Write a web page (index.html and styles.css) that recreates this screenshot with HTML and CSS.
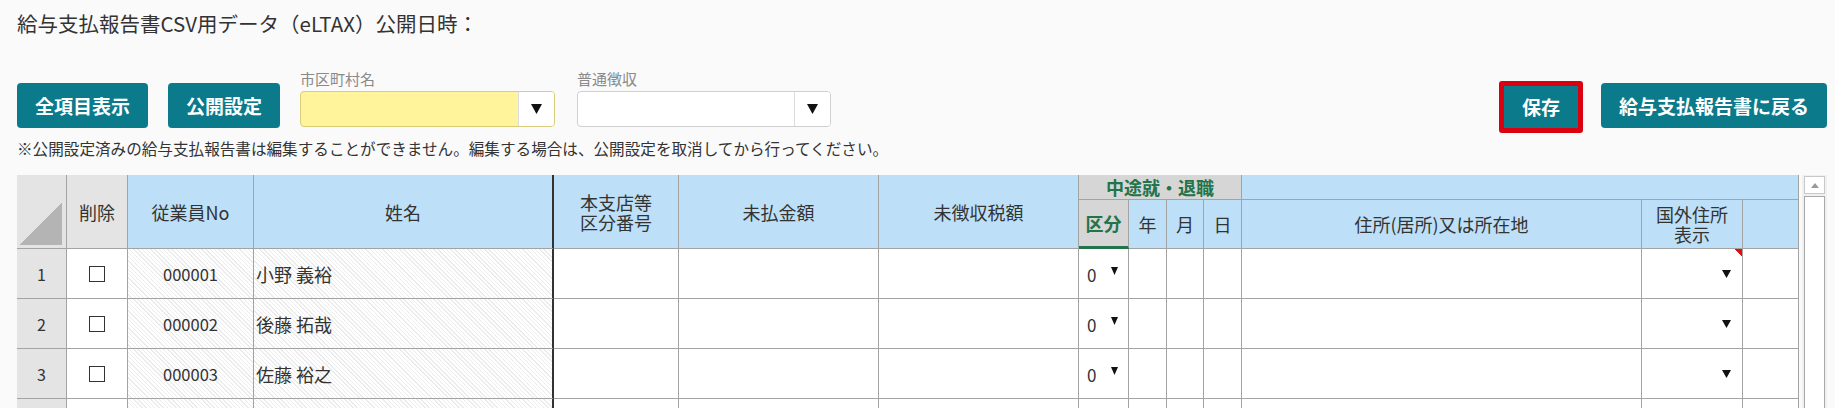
FILE: index.html
```html
<!DOCTYPE html>
<html lang="ja">
<head>
<meta charset="utf-8">
<title>給与支払報告書CSV用データ</title>
<link rel="stylesheet" href="styles.css">
</head>
<body>
<div class="page">
  <h1 class="title">給与支払報告書CSV用データ（eLTAX）公開日時：</h1>

  <div class="toolbar">
    <button class="btn">全項目表示</button>
    <button class="btn">公開設定</button>
    <div class="field">
      <span class="field-label">市区町村名</span>
      <div class="select select-yellow">
        <span class="select-value"></span>
        <span class="select-arrow"><svg width="11" height="10" viewBox="0 0 11 10"><polygon points="0,0 11,0 5.5,10" fill="#111"/></svg></span>
      </div>
    </div>
    <div class="field field-second">
      <span class="field-label">普通徴収</span>
      <div class="select">
        <span class="select-value"></span>
        <span class="select-arrow"><svg width="11" height="10" viewBox="0 0 11 10"><polygon points="0,0 11,0 5.5,10" fill="#111"/></svg></span>
      </div>
    </div>
    <div class="toolbar-right">
      <button class="btn btn-save">保存</button>
      <button class="btn">給与支払報告書に戻る</button>
    </div>
  </div>

  <p class="note">※公開設定済みの給与支払報告書は編集することができません。編集する場合は、公開設定を取消してから行ってください。</p>

  <div class="grid-wrap">
    <div class="grid">
      <div class="c h-gray corner r2"></div>
      <div class="c h-gray r2">削除</div>
      <div class="c h-blue r2">従業員No</div>
      <div class="c h-blue r2 thick">姓名</div>
      <div class="c h-blue r2 stack"><span>本支店等</span><span>区分番号</span></div>
      <div class="c h-blue r2">未払金額</div>
      <div class="c h-blue r2">未徴収税額</div>
      <div class="c h-group s4">中途就・退職</div>
      <div class="c h-blue s3"></div>

      <div class="c h-group h-active">区分</div>
      <div class="c h-blue">年</div>
      <div class="c h-blue">月</div>
      <div class="c h-blue">日</div>
      <div class="c h-blue">住所(居所)又は所在地</div>
      <div class="c h-blue stack"><span>国外住所</span><span>表示</span></div>
      <div class="c h-blue"></div>

      <div class="c rownum">1</div>
      <div class="c"><span class="check"></span></div>
      <div class="c hatch">000001</div>
      <div class="c hatch left thick">小野 義裕</div>
      <div class="c"></div>
      <div class="c"></div>
      <div class="c"></div>
      <div class="c kubun"><span class="kv">0</span><svg class="tri" width="7" height="8" viewBox="0 0 7 8"><polygon points="0,0 7,0 3.5,8" fill="#111"/></svg></div>
      <div class="c"></div>
      <div class="c"></div>
      <div class="c"></div>
      <div class="c"></div>
      <div class="c ddright flag"><svg class="tri" width="9" height="8" viewBox="0 0 9 8"><polygon points="0,0 9,0 4.5,8" fill="#111"/></svg></div>
      <div class="c"></div>

      <div class="c rownum">2</div>
      <div class="c"><span class="check"></span></div>
      <div class="c hatch">000002</div>
      <div class="c hatch left thick">後藤 拓哉</div>
      <div class="c"></div>
      <div class="c"></div>
      <div class="c"></div>
      <div class="c kubun"><span class="kv">0</span><svg class="tri" width="7" height="8" viewBox="0 0 7 8"><polygon points="0,0 7,0 3.5,8" fill="#111"/></svg></div>
      <div class="c"></div>
      <div class="c"></div>
      <div class="c"></div>
      <div class="c"></div>
      <div class="c ddright"><svg class="tri" width="9" height="8" viewBox="0 0 9 8"><polygon points="0,0 9,0 4.5,8" fill="#111"/></svg></div>
      <div class="c"></div>

      <div class="c rownum">3</div>
      <div class="c"><span class="check"></span></div>
      <div class="c hatch">000003</div>
      <div class="c hatch left thick">佐藤 裕之</div>
      <div class="c"></div>
      <div class="c"></div>
      <div class="c"></div>
      <div class="c kubun"><span class="kv">0</span><svg class="tri" width="7" height="8" viewBox="0 0 7 8"><polygon points="0,0 7,0 3.5,8" fill="#111"/></svg></div>
      <div class="c"></div>
      <div class="c"></div>
      <div class="c"></div>
      <div class="c"></div>
      <div class="c ddright"><svg class="tri" width="9" height="8" viewBox="0 0 9 8"><polygon points="0,0 9,0 4.5,8" fill="#111"/></svg></div>
      <div class="c"></div>

      <div class="c rownum"></div>
      <div class="c"></div>
      <div class="c hatch"></div>
      <div class="c hatch left thick"></div>
      <div class="c"></div>
      <div class="c"></div>
      <div class="c"></div>
      <div class="c"></div>
      <div class="c"></div>
      <div class="c"></div>
      <div class="c"></div>
      <div class="c"></div>
      <div class="c"></div>
      <div class="c"></div>
    </div>

    <div class="vscroll">
      <div class="vscroll-up"><svg width="8" height="5" viewBox="0 0 8 5"><polygon points="0,5 8,5 4,0" fill="#9a9a9a"/></svg></div>
      <div class="vscroll-thumb"></div>
    </div>
  </div>
</div>
</body>
</html>
```

FILE: styles.css
```css
* { box-sizing: border-box; }

html, body {
  margin: 0;
  padding: 0;
  background: #fafafa;
  overflow: hidden;
}

body {
  font-family: "Noto Sans CJK JP", "Noto Sans", sans-serif;
  color: #333;
}

.page {
  padding: 9px 8px 0 17px;
}

.title {
  margin: 0;
  font-size: 20.5px;
  line-height: 28px;
  font-weight: normal;
  color: #333;
}

.toolbar {
  display: flex;
  align-items: flex-end;
  gap: 20px;
  margin-top: 32px;
}

.btn {
  height: 45px;
  padding: 0 18px;
  border: none;
  border-radius: 4px;
  background: #0b7a8a;
  color: #fff;
  font-family: "Noto Sans CJK JP", sans-serif;
  font-size: 19px;
  font-weight: bold;
  line-height: 45px;
  white-space: nowrap;
}

.btn-save {
  height: 52px;
  width: 84px;
  padding: 0;
  border: 5px solid #d9000f;
  border-radius: 3px;
  line-height: 42px;
  margin-bottom: -5px;
}

.field {
  display: flex;
  flex-direction: column;
  margin-bottom: 1px;
}

.field-second {
  margin-left: 2px;
}

.field-label {
  font-size: 15px;
  line-height: 20px;
  color: #8a8a8a;
  margin-bottom: 2px;
}

.select {
  display: flex;
  width: 254px;
  height: 36px;
  border: 1px solid #cfcfcf;
  border-radius: 4px;
  background: #fff;
  overflow: hidden;
}

.select-yellow {
  width: 255px;
  background: #fff49b;
  border-color: #d9cd7a;
}

.select-value {
  flex: 1;
}

.select-arrow {
  width: 36px;
  display: flex;
  align-items: center;
  justify-content: center;
  background: #fff;
  border-left: 1px solid #dcdcdc;
}

.toolbar-right {
  margin-left: auto;
  display: flex;
  align-items: flex-end;
  gap: 18px;
}

.note {
  margin: 9px 0 16px;
  font-size: 15.6px;
  line-height: 22px;
  color: #333;
}

.grid-wrap {
  display: flex;
  align-items: flex-start;
}

.grid {
  display: grid;
  grid-template-columns: 50px 61px 126px 300px 125px 200px 200px 50px 38px 37px 38px 400px 101px 56px;
  grid-template-rows: 25px 49px 50px 50px 50px 50px;
  background: #fff;
  font-size: 18px;
  color: #333;
}

.c {
  border-right: 1px solid #a3a3a3;
  border-bottom: 1px solid #a3a3a3;
  display: flex;
  align-items: center;
  justify-content: center;
  white-space: nowrap;
  background: #fff;
  line-height: 24px;
}

.r2 { grid-row: span 2; }
.s4 { grid-column: span 4; }
.s3 { grid-column: span 3; }

.stack {
  flex-direction: column;
  line-height: 20px;
}

.h-blue { background: #bde0f8; }
.h-gray { background: #e4e4e4; }

.corner {
  background: linear-gradient(to bottom right, transparent 50%, #b4b4b4 50%) no-repeat right 4px bottom 3px / 43px 43px, #e4e4e4;
}

.h-group {
  background: #d6d6d6;
  color: #23744a;
  font-weight: bold;
}

.h-active {
  border-bottom: 3px solid #23744a;
}

.thick { border-right: 2px solid #333; }

.rownum {
  background: #e4e4e4;
  font-size: 16px;
}

.check {
  width: 16px;
  height: 16px;
  border: 1px solid #333;
  background: #fff;
}

.hatch {
  background: repeating-linear-gradient(45deg, #ffffff 0 2px, #ececec 2px 3px);
}

.hatch:not(.left) {
  font-size: 16.5px;
}

.left {
  justify-content: flex-start;
  padding-left: 2px;
}

.kubun {
  justify-content: flex-start;
  padding-left: 8px;
  gap: 15px;
}

.kv {
  font-size: 17px;
  margin-top: 3px;
}

.kubun .tri {
  margin-top: -6px;
}

.ddright {
  justify-content: flex-end;
  padding-right: 11px;
}

.flag {
  background: linear-gradient(225deg, #e01010 5px, transparent 5px), #fff;
}

.vscroll {
  margin-left: 3px;
  width: 25px;
  height: 260px;
  background: #f0f0f0;
  padding: 1px 2px 0;
  display: flex;
  flex-direction: column;
  gap: 2px;
}

.vscroll-up {
  height: 18px;
  border: 1px solid #c8c8c8;
  background: #fff;
  display: flex;
  align-items: center;
  justify-content: center;
}

.vscroll-thumb {
  flex: 1;
  border: 1px solid #a8a8a8;
  background: #fff;
}
```
